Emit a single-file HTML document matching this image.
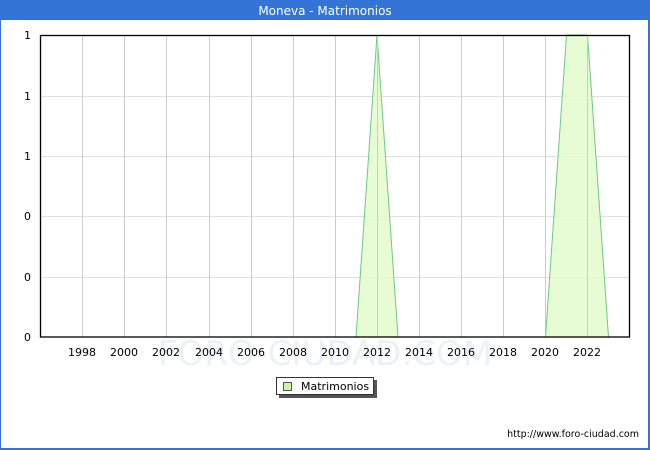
<!DOCTYPE html>
<html><head><style>
body{margin:0;width:650px;height:450px;overflow:hidden;font-family:"DejaVu Sans","Liberation Sans",sans-serif;}
</style></head><body>
<svg width="650" height="450" xmlns="http://www.w3.org/2000/svg" style="display:block">
<rect x="0" y="0" width="650" height="450" fill="#3374d6"/>
<rect x="1" y="20" width="647" height="428" fill="#fff"/>
<text x="325" y="15" fill="#fff" font-size="12" text-anchor="middle" font-family="DejaVu Sans, sans-serif">Moneva - Matrimonios</text>
<text x="325" y="365" fill="#eef0f8" font-size="34" text-anchor="middle" font-family="DejaVu Sans, sans-serif">FORO-CIUDAD.COM</text>
<g stroke="#e0e0e0" stroke-width="1">
<line x1="40" y1="96.5" x2="630" y2="96.5"/><line x1="40" y1="156.5" x2="630" y2="156.5"/><line x1="40" y1="216.5" x2="630" y2="216.5"/><line x1="40" y1="277.5" x2="630" y2="277.5"/>
</g>
<g stroke="#cccccc" stroke-width="1">
<line x1="82.5" y1="35" x2="82.5" y2="337"/><line x1="124.5" y1="35" x2="124.5" y2="337"/><line x1="166.5" y1="35" x2="166.5" y2="337"/><line x1="209.5" y1="35" x2="209.5" y2="337"/><line x1="251.5" y1="35" x2="251.5" y2="337"/><line x1="293.5" y1="35" x2="293.5" y2="337"/><line x1="335.5" y1="35" x2="335.5" y2="337"/><line x1="377.5" y1="35" x2="377.5" y2="337"/><line x1="419.5" y1="35" x2="419.5" y2="337"/><line x1="461.5" y1="35" x2="461.5" y2="337"/><line x1="503.5" y1="35" x2="503.5" y2="337"/><line x1="545.5" y1="35" x2="545.5" y2="337"/><line x1="587.5" y1="35" x2="587.5" y2="337"/>
</g>
<polygon points="356,337 377,35 398,337" fill="#e4fccc" fill-opacity="0.85" stroke="#6cc88a" stroke-width="1"/>
<polygon points="545.5,337 566.5,35 587.5,35 608.5,337" fill="#e4fccc" fill-opacity="0.85" stroke="#6cc88a" stroke-width="1"/>
<line x1="377.5" y1="35" x2="377.5" y2="337" stroke="#cccccc"/>
<line x1="587.5" y1="35" x2="587.5" y2="337" stroke="#cccccc"/>
<rect x="40.5" y="35.5" width="589" height="301.5" fill="none" stroke="#000" stroke-width="1.3"/>
<g font-size="11" fill="#000" text-anchor="end" font-family="DejaVu Sans, sans-serif">
<text x="31" y="39">1</text><text x="31" y="100">1</text><text x="31" y="160">1</text><text x="31" y="220">0</text><text x="31" y="281">0</text><text x="31" y="341">0</text>
</g>
<g font-size="11" fill="#000" text-anchor="middle" font-family="DejaVu Sans, sans-serif">
<text x="82" y="356">1998</text><text x="124" y="356">2000</text><text x="166" y="356">2002</text><text x="209" y="356">2004</text><text x="251" y="356">2006</text><text x="293" y="356">2008</text><text x="335" y="356">2010</text><text x="377" y="356">2012</text><text x="419" y="356">2014</text><text x="461" y="356">2016</text><text x="503" y="356">2018</text><text x="545" y="356">2020</text><text x="587" y="356">2022</text>
</g>
<rect x="279" y="380" width="98" height="18" fill="#555"/>
<rect x="276.5" y="377.5" width="97" height="17" fill="#fff" stroke="#333"/>
<rect x="283.5" y="382.5" width="8" height="8" fill="#ccf5a0" stroke="#555"/>
<text x="301" y="390" font-size="11" font-family="DejaVu Sans, sans-serif">Matrimonios</text>
<text x="639" y="437" font-size="9.5" text-anchor="end" font-family="DejaVu Sans, sans-serif">http://www.foro-ciudad.com</text>
</svg>
</body></html>
